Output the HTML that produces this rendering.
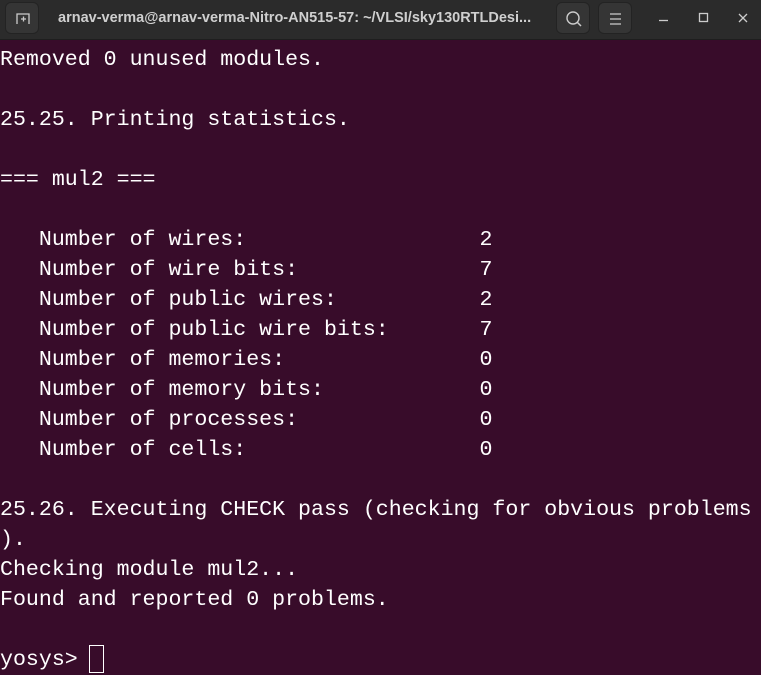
<!DOCTYPE html>
<html><head><meta charset="utf-8"><style>
html,body{margin:0;padding:0;width:761px;height:670px;overflow:hidden;background:#380c2a;}
.tb{position:absolute;left:0;top:0;width:761px;height:40px;background:#2b2b2b;border-bottom:1px solid #1e1e1e;box-sizing:border-box;}
.btn{position:absolute;top:2px;width:34px;height:32px;border-radius:6px;background:#353535;border:1px solid #232323;box-sizing:border-box;}
.title{position:absolute;left:58px;top:10px;font:bold 14.5px "Liberation Sans",sans-serif;color:#cfcfcf;white-space:nowrap;}
pre{position:absolute;left:0;top:45px;margin:0;font:21.6px/30px "Liberation Mono",monospace;color:#ffffff;}
.cur{display:inline-block;width:13px;height:26px;border:1px solid #fff;vertical-align:-8px;margin-left:-2px;}
</style></head><body>
<div class="tb">
 <div class="btn" style="left:5px"><svg width="34" height="32" viewBox="0 0 34 32"><path d="M11 21V11h12v10M15 16h5M17.5 13.5v5" stroke="#ccc" stroke-width="1.3" fill="none"/></svg></div>
 <div class="title">arnav-verma@arnav-verma-Nitro-AN515-57: ~/VLSI/sky130RTLDesi...</div>
 <div class="btn" style="left:556px"><svg width="34" height="32" viewBox="0 0 34 32"><circle cx="16" cy="15" r="6" stroke="#ccc" stroke-width="1.4" fill="none"/><path d="M20 19l4 4" stroke="#ccc" stroke-width="1.5"/></svg></div>
 <div class="btn" style="left:598px"><svg width="34" height="32" viewBox="0 0 34 32"><path d="M11 11h11M11 16h11M11 21h11" stroke="#ccc" stroke-width="1.2"/></svg></div>
 <svg style="position:absolute;left:640px;top:0" width="121" height="40" viewBox="0 0 121 40"><path d="M19 20.5h9" stroke="#ccc" stroke-width="1.3"/><rect x="59.5" y="13.5" width="8" height="8" stroke="#ccc" stroke-width="1.3" fill="none"/><path d="M99 14l8 8M107 14l-8 8" stroke="#ccc" stroke-width="1.3"/></svg>
</div>
<pre>Removed 0 unused modules.

25.25. Printing statistics.

=== mul2 ===

   Number of wires:                  2
   Number of wire bits:              7
   Number of public wires:           2
   Number of public wire bits:       7
   Number of memories:               0
   Number of memory bits:            0
   Number of processes:              0
   Number of cells:                  0

25.26. Executing CHECK pass (checking for obvious problems
).
Checking module mul2...
Found and reported 0 problems.

yosys&gt; <span class="cur"></span></pre>
</body></html>
